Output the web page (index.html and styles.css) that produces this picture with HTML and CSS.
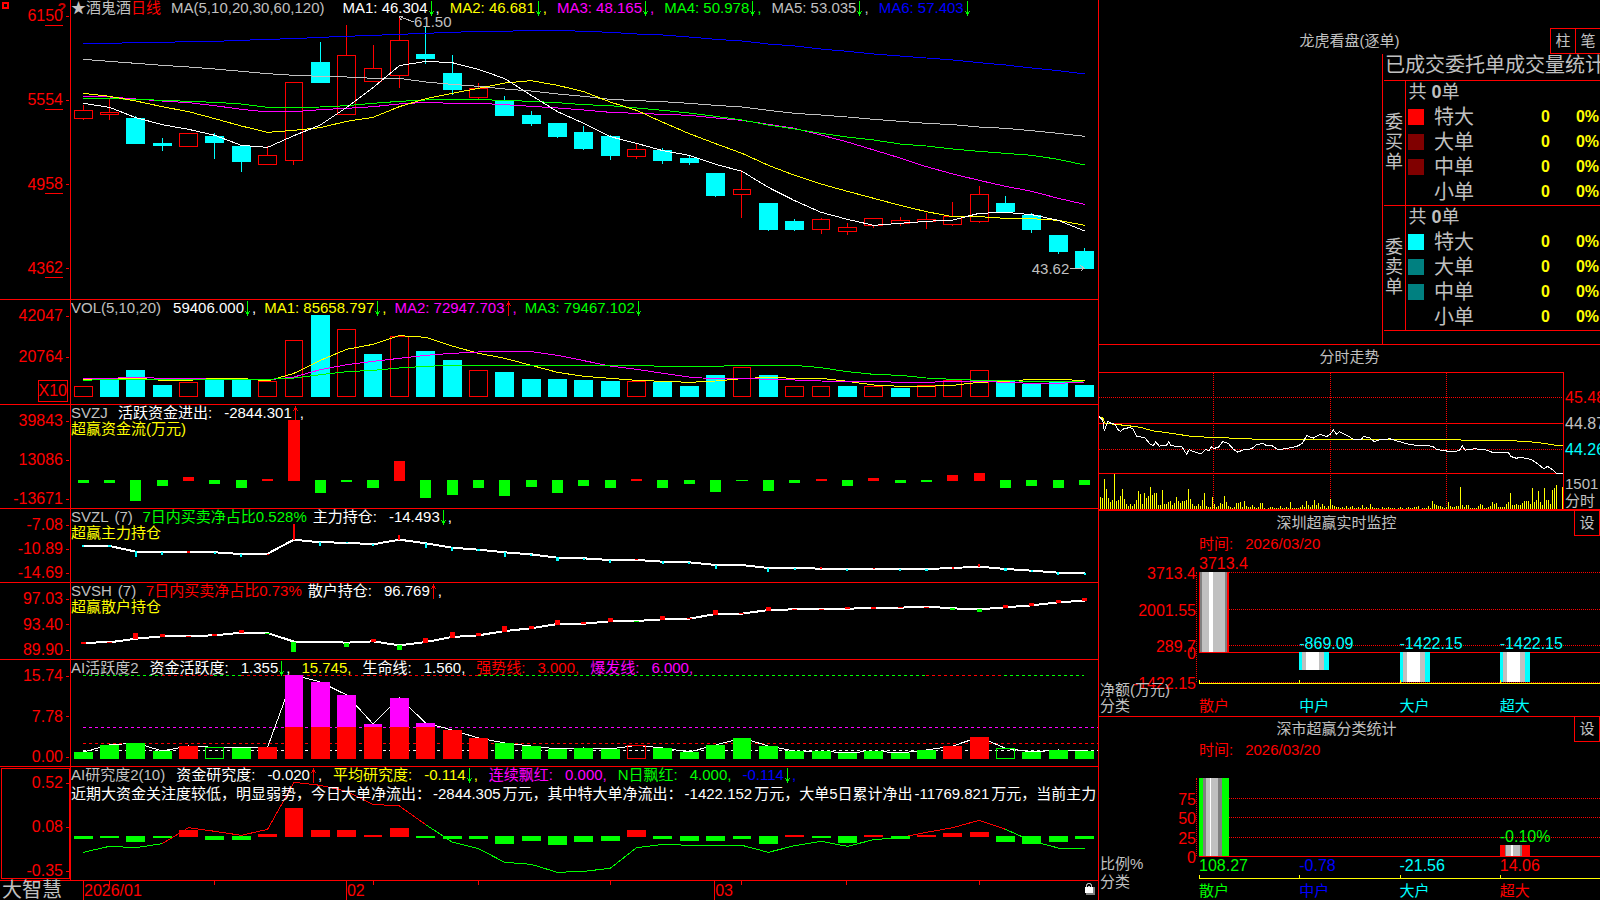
FILE: index.html
```html
<!DOCTYPE html>
<html lang="zh-CN">
<head>
    <meta charset="UTF-8">
    <meta name="viewport" content="width=device-width, initial-scale=1.0">
    <title>酒鬼酒 日线 - 大智慧</title>
    <link rel="stylesheet" href="styles.css">
</head>
<body>
    <svg class="defs" aria-hidden="true">
        <symbol id="down" viewBox="0 0 8 15"><path d="M3 0h1v15h-1zM1 10h1v1h-1zM5 10h1v1h-1zM2 11h3v2h-3z"/></symbol>
        <symbol id="up" viewBox="0 0 8 15"><path d="M3 0h1v15h-1zM1 4h1v1h-1zM5 4h1v1h-1zM2 2h3v2h-3z"/></symbol>
    </svg>

    <div class="terminal">
        <!-- K线与指标 -->
        <main class="charts">
            <section class="panel">
                <div class="axis underlined">
                    <svg class="pin" viewBox="0 0 8 8"><path d="M1 1h5v5h-5z"/></svg>
                    <b class="help">?</b>
                    <span class="tick">61<u>50</u></span>
                    <span class="tick">55<u>54</u></span>
                    <span class="tick">49<u>58</u></span>
                    <span class="tick">43<u>62</u></span>
                </div>
                <div class="plot">
                    <svg class="chart" id="kline" viewBox="199 0 2876 897" preserveAspectRatio="none"></svg>
                    <div class="legend averages">
                        <p><span class="name">★酒鬼酒<span class="red">日线</span></span><span class="params">MA(5,10,20,30,60,120)</span>
                            <span class="white">MA1: 46.304<svg class="arrow down"><use href="#down"/></svg>,</span>
                            <span class="yellow">MA2: 46.681<svg class="arrow down"><use href="#down"/></svg>,</span>
                            <span class="magenta">MA3: 48.165<svg class="arrow down"><use href="#down"/></svg>,</span>
                            <span class="lime">MA4: 50.978<svg class="arrow down"><use href="#down"/></svg>,</span>
                            <span>MA5: 53.035<svg class="arrow down"><use href="#down"/></svg>,</span>
                            <span class="blue">MA6: 57.403<svg class="arrow down"><use href="#down"/></svg></span></p>
                    </div>
                    <span class="mark high">61.50</span>
                    <span class="mark low">43.62</span>
                </div>
            </section>

            <section class="panel">
                <div class="axis volume-axis">
                    <span class="tick">42047</span>
                    <span class="tick">20764</span>
                    <span class="unit">X10</span>
                </div>
                <div class="plot">
                    <svg class="chart" id="vol" viewBox="199 12 2876 312" preserveAspectRatio="none"></svg>
                    <div class="legend volumes">
                        <p><span class="params">VOL(5,10,20)</span>
                            <span class="white">59406.000<svg class="arrow down"><use href="#down"/></svg>,</span>
                            <span class="yellow">MA1: 85658.797<svg class="arrow down"><use href="#down"/></svg>,</span>
                            <span class="magenta">MA2: 72947.703<svg class="arrow up"><use href="#up"/></svg>,</span>
                            <span class="lime">MA3: 79467.102<svg class="arrow down"><use href="#down"/></svg></span></p>
                    </div>
                </div>
            </section>

            <section class="panel">
                <div class="axis">
                    <span class="tick">39843</span>
                    <span class="tick">13086</span>
                    <span class="tick">-13671</span>
                </div>
                <div class="plot">
                    <svg class="chart" id="svzj" viewBox="199 327 2876 309" preserveAspectRatio="none"></svg>
                    <div class="legend">
                        <p><span class="code wide">SVZJ</span><span class="white">活跃资金进出:<span class="val">-2844.301</span><svg class="arrow up"><use href="#up"/></svg>,</span></p>
                        <p class="yellow">超赢资金流(万元)</p>
                    </div>
                </div>
            </section>

            <section class="panel">
                <div class="axis">
                    <span class="tick">-7.08</span>
                    <span class="tick">-10.89</span>
                    <span class="tick">-14.69</span>
                </div>
                <div class="plot">
                    <svg class="chart" id="svzl" viewBox="199 639 2876 219" preserveAspectRatio="none"></svg>
                    <div class="legend">
                        <p><span class="code">SVZL</span><span class="period">(7)</span><span class="lime">7日内买卖净占比0.528%</span><span class="white">主力持仓:<span class="val">-14.493</span><svg class="arrow down"><use href="#down"/></svg>,</span></p>
                        <p class="yellow">超赢主力持仓</p>
                    </div>
                </div>
            </section>

            <section class="panel">
                <div class="axis">
                    <span class="tick">97.03</span>
                    <span class="tick">93.40</span>
                    <span class="tick">89.90</span>
                </div>
                <div class="plot">
                    <svg class="chart" id="svsh" viewBox="199 9 2876 228" preserveAspectRatio="none"></svg>
                    <div class="legend">
                        <p><span class="code">SVSH</span><span class="period">(7)</span><span class="red">7日内买卖净占比0.73%</span><span class="white">散户持仓:<span class="val">96.769</span><svg class="arrow up"><use href="#up"/></svg>,</span></p>
                        <p class="yellow">超赢散户持仓</p>
                    </div>
                </div>
            </section>

            <section class="panel">
                <div class="axis">
                    <span class="tick">15.74</span>
                    <span class="tick">7.78</span>
                    <span class="tick">0.00</span>
                </div>
                <div class="plot">
                    <svg class="chart" id="active" viewBox="199 240 2876 318" preserveAspectRatio="none"></svg>
                    <div class="legend spaced">
                        <p><span>AI活跃度2</span><span class="white">资金活跃度:<span class="val">1.355</span><svg class="arrow down"><use href="#down"/></svg>,</span><span class="yellow">15.745,</span><span class="white">生命线:<span class="val">1.560,</span></span><span class="red">强势线:<span class="val">3.000,</span></span><span class="magenta">爆发线:<span class="val">6.000,</span></span></p>
                    </div>
                </div>
            </section>

            <section class="panel selected">
                <div class="axis">
                    <span class="tick">0.52</span>
                    <span class="tick">0.08</span>
                    <span class="tick">-0.35</span>
                </div>
                <div class="plot">
                    <svg class="chart" id="research" viewBox="199 561 2876 339" preserveAspectRatio="none"></svg>
                    <div class="legend spaced">
                        <p><span>AI研究度2(10)</span><span class="white">资金研究度:<span class="val">-0.020</span><svg class="arrow up"><use href="#up"/></svg>,</span><span class="yellow">平均研究度:<span class="val">-0.114</span><svg class="arrow down"><use href="#down"/></svg>,</span><span class="magenta">连续飘红:<span class="val">0.000,</span></span><span class="lime">N日飘红:<span class="val">4.000,</span></span><span class="blue">-0.114<svg class="arrow down"><use href="#down"/></svg>,</span></p>
                        <p class="comment">近期大资金关注度较低，明显弱势，今日大单净流出：<span>-2844.305</span>万元，其中特大单净流出：<span>-1422.152</span>万元，大单5日累计净出<span>-11769.821</span>万元，当前主力</p>
                    </div>
                </div>
            </section>

            <footer class="timeline">
                <div class="brand">大智慧</div>
                <div class="plot">
                    <svg class="chart" id="dates" viewBox="199 903 2876 57" preserveAspectRatio="none"></svg>
                    <div class="months"><span>2026/01</span><span>02</span><span>03</span></div>
                    <svg class="lock" viewBox="0 0 12 13">
                        <path fill="#808080" d="M2 5h9v8H2z"/><path fill="#fff" d="M1 5h8v6H1z"/>
                        <path fill="none" stroke="#c0c0c0" d="M2.500 5V2.500h1v-1h3v1h1V5M4 4.500h2"/>
                    </svg>
                </div>
            </footer>
        </main>

        <aside class="side">
            <!-- 逐单统计 -->
            <section class="orders">
                <header class="orders-head">
                    <h2>龙虎看盘(逐单)</h2>
                    <div class="modes"><button>柱</button><button>笔</button></div>
                </header>
                <div class="orders-body">
                    <table>
                        <colgroup><col class="c-group"><col class="c-swatch"><col class="c-label"><col><col class="c-pct"></colgroup>
                        <thead>
                            <tr><th colspan="5"><div>已成交委托单成交量统计</div></th></tr>
                        </thead>
                        <tbody>
                            <tr><th rowspan="5" class="group"><div>委买单</div></th><td colspan="4" class="total">共 <b>0</b>单</td></tr>
                            <tr><td><i class="swatch buy"></i></td><td>特大</td><td class="num">0</td><td class="num">0%</td></tr>
                            <tr><td><i class="swatch buy-dim"></i></td><td>大单</td><td class="num">0</td><td class="num">0%</td></tr>
                            <tr><td><i class="swatch buy-dim"></i></td><td>中单</td><td class="num">0</td><td class="num">0%</td></tr>
                            <tr><td></td><td>小单</td><td class="num">0</td><td class="num">0%</td></tr>
                        </tbody>
                        <tbody>
                            <tr><th rowspan="5" class="group"><div>委卖单</div></th><td colspan="4" class="total">共 <b>0</b>单</td></tr>
                            <tr><td><i class="swatch sell"></i></td><td>特大</td><td class="num">0</td><td class="num">0%</td></tr>
                            <tr><td><i class="swatch sell-dim"></i></td><td>大单</td><td class="num">0</td><td class="num">0%</td></tr>
                            <tr><td><i class="swatch sell-dim"></i></td><td>中单</td><td class="num">0</td><td class="num">0%</td></tr>
                            <tr><td></td><td>小单</td><td class="num">0</td><td class="num">0%</td></tr>
                        </tbody>
                    </table>
                </div>
            </section>

            <!-- 分时走势 -->
            <section class="intraday">
                <h2>分时走势</h2>
                <div class="intraday-body">
                    <div class="intraday-plot">
                        <svg class="chart" id="minute" viewBox="27 98 1392 411" preserveAspectRatio="none"></svg>
                    </div>
                    <div class="prices">
                        <span class="red">45.48</span>
                        <span>44.87</span>
                        <span class="cyan">44.26</span>
                        <div class="prices-foot">1501<br>分时</div>
                    </div>
                </div>
            </section>

            <section class="stat">
                <header><h2>深圳超赢实时监控</h2><button>设</button></header>
                <p class="time">时间:<span class="val">2026/03/20</span></p>
                <div class="bars" id="net"></div>
                <div class="cats tall"><span class="red">散户</span><span class="cyan">中户</span><span class="cyan">大户</span><span class="cyan">超大</span></div>
                <div class="row-names">净额(万元)<br>分类</div>
            </section>

            <section class="stat">
                <header><h2>深市超赢分类统计</h2><button>设</button></header>
                <p class="time">时间:<span class="val">2026/03/20</span></p>
                <div class="bars" id="ratio"></div>
                <div class="values"><span class="lime">108.27</span><span class="blue">-0.78</span><span class="cyan">-21.56</span><span class="red">14.06</span></div>
                <div class="cats"><span class="lime">散户</span><span class="blue">中户</span><span class="cyan">大户</span><span class="red">超大</span></div>
                <div class="row-names loose">比例%<br>分类</div>
            </section>
        </aside>
    </div>

    <script src="charts.js"></script>
</body>
</html>
```
FILE: styles.css
```css
* {
    box-sizing: border-box;
}

body {
    margin: 0;
    background: #000;
    color: #c0c0c0;
    font-family: "Liberation Sans", "Noto Sans CJK SC", sans-serif;
    font-size: 15px;
    line-height: 16px;
}

h2, p {
    margin: 0;
    font-size: 15px;
    font-weight: normal;
}

button {
    width: 26px;
    height: 26px;
    padding: 0;
    background: #000;
    color: #c0c0c0;
    border: 1px solid #f00;
    font: inherit;
}

.defs {
    display: none;
}

.red { color: #f00; }
.white { color: #fff; }
.yellow { color: #ff0; }
.magenta { color: #f0f; }
.lime { color: #0f0; }
.blue { color: #00f; }
.cyan { color: #0ff; }

.terminal {
    display: grid;
    grid-template-columns: minmax(0, 1099fr) minmax(0, 501fr);
    height: 100vh;
    overflow: hidden;
}

/* left side */
.charts {
    display: grid;
    grid-template-rows: 300fr 105fr 104fr 74fr 77fr 107fr 114fr 19fr;
    border-right: 1px solid #f00;
    min-height: 0;
}

.panel, .timeline {
    display: grid;
    grid-template-columns: 71px minmax(0, 1fr);
    min-height: 0;
}

.panel {
    border-bottom: 1px solid #f00;
}

.axis {
    position: relative;
    display: flex;
    flex-direction: column;
    justify-content: space-between;
    padding-top: 7px;
    border-right: 1px solid #f00;
    color: #f00;
    font-size: 16px;
    line-height: 18px;
    min-height: 0;
}

.axis.underlined {
    padding-bottom: 21px;
}

.tick {
    display: flex;
    justify-content: flex-end;
    align-items: center;
    height: 18px;
}

.tick::after {
    content: "";
    width: 3px;
    height: 1px;
    margin: 0 1px 0 3px;
    background: #f00;
}

.tick u {
    height: 19px;
    border-bottom: 1px solid #f00;
    text-decoration: none;
}

.volume-axis .tick + .tick {
    margin-top: 23px;
}

.volume-axis {
    justify-content: flex-start;
}

.unit {
    align-self: flex-end;
    margin: auto 2px 2px 0;
    border: 1px solid #f00;
    line-height: 20px;
}

.selected .axis {
    outline: 1px solid #f00;
    outline-offset: -2px;
}

.pin {
    position: absolute;
    left: 2px;
    top: 2px;
    width: 8px;
    height: 8px;
    fill: none;
    stroke: #f00;
    stroke-width: 2;
}

.help {
    position: absolute;
    right: 4px;
    top: 0;
    color: #c00;
    font-size: 14px;
    line-height: 16px;
}

.plot {
    position: relative;
    display: grid;
    grid-template: minmax(0, 1fr) / minmax(0, 1fr);
    overflow: hidden;
}

.plot > .chart, .plot > .legend, .plot > .months {
    grid-area: 1 / 1;
}

.chart {
    display: block;
    width: 100%;
    height: 100%;
    shape-rendering: crispEdges;
}

.chart * {
    vector-effect: non-scaling-stroke;
}

.legend {
    white-space: nowrap;
}

.legend p {
    display: flex;
    gap: 6px;
    height: 16px;
}

.legend.averages p {
    gap: 10px;
}

.legend.volumes p {
    gap: 8px;
}

.legend.spaced p {
    gap: 11px;
}

.averages .params {
    margin-right: 8px;
}

.volumes .params {
    margin-right: 4px;
}

.legend .code {
    min-width: 36px;
}

.legend .code.wide {
    min-width: 41px;
}

.legend .period {
    min-width: 22px;
}

.val {
    margin-left: 12px;
}

.legend p.comment {
    display: block;
    margin-top: 3px;
    color: #fff;
}

.comment span {
    margin: 0 2px;
}

.arrow {
    width: 8px;
    height: 15px;
    vertical-align: -3px;
    shape-rendering: crispEdges;
}

.arrow.down { fill: #0f0; }
.arrow.up { fill: #f00; }

.mark {
    position: absolute;
}

.mark.high {
    left: 33.4%;
    top: 14px;
}

.mark.low {
    right: 2.8%;
    top: 87.3%;
}

.brand {
    padding-left: 2px;
    font-size: 20px;
    line-height: 19px;
}

.months {
    display: grid;
    grid-template-columns: 737fr 1032fr 1073fr;
    padding-left: 13px;
    color: #f00;
    font-size: 16px;
    line-height: 19px;
}

.lock {
    position: absolute;
    right: 2px;
    top: 1px;
    width: 12px;
    height: 13px;
}

/* right side */
.side {
    display: grid;
    grid-template-rows: 345fr 166fr 206fr 183fr;
    min-height: 0;
}

.orders {
    display: flex;
    flex-direction: column;
    border-bottom: 1px solid #f00;
    min-height: 0;
}

.orders-head {
    display: grid;
    grid-template-columns: 1fr auto 1fr;
    align-items: center;
    padding-top: 28px;
}

.orders-head h2 {
    grid-column: 2;
}

.modes {
    display: flex;
    justify-self: end;
}

.modes button + button {
    width: 25px;
    margin-left: -1px;
    border-right: 0;
}

.orders-body {
    flex: 1;
    width: 218px;
    margin-left: auto;
    padding-left: 1px;
    border-left: 1px solid #f00;
    overflow: hidden;
}

.orders table {
    width: 100%;
    border-collapse: collapse;
    table-layout: fixed;
    font-size: 20px;
    line-height: 22px;
}

.c-group { width: 21px; }
.c-swatch { width: 29px; }
.c-label { width: 60px; }
.c-pct { width: 49px; }

.orders th, .orders td {
    height: 25px;
    padding: 0 0 2px;
    font-weight: normal;
    text-align: left;
    vertical-align: middle;
    white-space: nowrap;
}

.orders thead th, .orders tbody {
    border-bottom: 1px solid #f00;
}

.orders thead div {
    height: 24px;
    overflow: hidden;
    padding-left: 1px;
}

.orders .group {
    border-right: 1px solid #f00;
}

.group div {
    width: 20px;
    padding-left: 1px;
    font-size: 18px;
    line-height: 20px;
    white-space: normal;
    word-break: break-all;
}

.orders .total {
    padding-left: 3px;
    font-size: 18px;
}

.orders .num {
    padding-right: 1px;
    color: #ff0;
    font-size: 16px;
    font-weight: bold;
    text-align: right;
}

.swatch {
    display: block;
    width: 16px;
    height: 16px;
    margin-left: 2px;
}

.buy { background: #f00; }
.buy-dim { background: #800000; }
.sell { background: #0ff; }
.sell-dim { background: #008080; }

.intraday {
    display: flex;
    flex-direction: column;
    border-bottom: 2px solid #f00;
    min-height: 0;
}

.intraday h2 {
    height: 27px;
    line-height: 24px;
    text-align: center;
}

.intraday-body {
    flex: 1;
    display: flex;
    min-height: 0;
}

.intraday-plot {
    flex: 1;
    border: 1px solid #f00;
    border-width: 1px 1px 0 0;
}

.prices {
    display: flex;
    flex-direction: column;
    gap: 8px;
    width: 36px;
    padding: 17px 0 0 1px;
    overflow: hidden;
    font-size: 16px;
    line-height: 18px;
}

.prices-foot {
    margin-top: auto;
    font-size: 15px;
    line-height: 17px;
}

.stat {
    position: relative;
    display: flex;
    flex-direction: column;
    min-height: 0;
}

.stat + .stat {
    border-top: 1px solid #f00;
    margin-top: -1px;
}

.stat header {
    display: grid;
    grid-template-columns: 26px 1fr 26px;
    height: 25px;
    text-align: center;
    line-height: 24px;
}

.stat header h2 {
    grid-column: 2;
    padding-right: 26px;
}

.stat header button {
    margin-top: -1px;
}

.time {
    margin-left: 100px;
    color: #f00;
    line-height: 16px;
    height: 18px;
}

.bars {
    position: relative;
    flex: 1;
    margin: 18px 0 0 100px;
    min-height: 0;
}

.bars::before {
    content: "";
    position: absolute;
    left: -3px;
    height: 100%;
    border-left: 1px dotted #f00;
}

.rule {
    position: absolute;
    left: 0;
    right: 0;
    height: 0;
    border-top: 1px dotted #f00;
}

.rule.zero {
    border-top-style: solid;
}

.rule span {
    position: absolute;
    right: 100%;
    top: -7px;
    margin-right: 3px;
    color: #f00;
    font-size: 16px;
}

.bar {
    position: absolute;
    width: 30px;
}

.bar span {
    position: absolute;
    left: 0;
    bottom: 100%;
    font-size: 16px;
    white-space: nowrap;
}

.bar.retail {
    background: linear-gradient(90deg, #f00 1px, #808080 1px 3px, #c0c0c0 3px 10px, #fff 10px 14px, #c0c0c0 14px 26px, #808080 26px 28px, #f00 28px);
}

.bar.outflow {
    background: linear-gradient(90deg, #0ff 3px, #c0c0c0 3px 7px, #fff 7px 20px, #c0c0c0 20px 25px, #0ff 25px);
}

.bar.retail-ratio {
    background: linear-gradient(90deg, #0f0 4px, #808080 4px 7px, #c0c0c0 7px 11px, #fff 11px 12px, #c0c0c0 12px 19px, #808080 19px 23px, #0f0 23px);
}

.bar.super-ratio {
    background: linear-gradient(90deg, #f00 5px, #808080 5px 6px, #c0c0c0 6px 11px, #fff 11px 13px, #c0c0c0 13px 20px, #808080 20px 22px, #f00 22px);
}

.values, .cats {
    display: grid;
    grid-template-columns: repeat(4, 1fr);
    margin-left: 100px;
}

.values {
    height: 18px;
    padding-top: 2px;
    font-size: 16px;
}

.cats {
    height: 26px;
    padding-top: 4px;
    line-height: 16px;
}

.cats span {
    position: relative;
    height: 22px;
    padding-top: 4px;
    border-top: 1px solid #ff0;
}

.cats span::before {
    content: "";
    position: absolute;
    left: 0;
    bottom: 100%;
    width: 1px;
    height: 4px;
    background: #ff0;
}

.cats.tall {
    height: 35px;
    padding-top: 1px;
}

.cats.tall span {
    padding-top: 14px;
}

.row-names {
    position: absolute;
    left: 1px;
    bottom: 3px;
}

.row-names.loose {
    bottom: 9px;
    line-height: 18px;
}
```
FILE: charts.js
```js
const RED = '#f00', CYAN = '#0ff', LIME = '#0f0', WHITE = '#fff', YELLOW = '#ff0', MAGENTA = '#f0f', BLUE = '#00f', SILVER = '#c0c0c0';

// horizontal centre of the n-th day
const dayX = i => 233 + 73.8 * i;

function add(id, tag, attrs) {
    const el = document.createElementNS('http://www.w3.org/2000/svg', tag);
    for (const key in attrs) el.setAttribute(key, attrs[key]);
    document.getElementById(id).appendChild(el);
}

function fillBox(id, i, top, bottom, width, color) {
    add(id, 'rect', { x: dayX(i) - width / 2, y: top, width: width, height: bottom - top, fill: color });
}

function hollowBox(id, i, top, bottom, color, stroke = 1) {
    add(id, 'rect', { x: dayX(i) - 25, y: top, width: 50, height: bottom - top, fill: 'none', stroke: color, 'stroke-width': stroke });
}

function line(id, points, color, width = 1, dash = '') {
    add(id, 'polyline', { points: points.map(p => p.join(',')).join(' '), fill: 'none', stroke: color, 'stroke-width': width, 'stroke-dasharray': dash });
}

function series(id, ys, color, width, from = 0) {
    line(id, ys.map((y, i) => [dayX(i + from), y]), color, width);
}

// K线: high, body top, body bottom, low, rising
const candles = [
    [315, 331, 355, 359, 1], [296, 338, 343, 359, 1], [348, 354, 432, 432, 0], [414, 429, 437, 452, 0],
    [400, 400, 439, 439, 1], [399, 408, 429, 476, 0], [438, 438, 486, 515, 0], [438, 466, 493, 493, 1],
    [247, 247, 481, 494, 1], [126, 186, 248, 248, 0], [75, 166, 343, 343, 1], [135, 205, 244, 244, 1],
    [50, 121, 226, 263, 1], [80, 162, 177, 191, 0], [165, 219, 269, 285, 0], [249, 265, 292, 297, 1],
    [288, 302, 347, 347, 0], [333, 345, 371, 377, 0], [369, 369, 411, 413, 0], [378, 396, 446, 449, 0],
    [406, 408, 467, 479, 0], [430, 448, 469, 476, 1], [444, 450, 482, 491, 0], [466, 474, 488, 494, 0],
    [519, 519, 587, 590, 0], [510, 568, 583, 653, 1], [609, 609, 689, 692, 0], [657, 663, 689, 692, 0],
    [654, 658, 688, 701, 1], [669, 682, 694, 704, 1], [655, 655, 676, 683, 1], [651, 661, 670, 677, 1],
    [639, 658, 664, 686, 1], [606, 649, 673, 677, 1], [558, 583, 664, 668, 1], [588, 609, 636, 636, 0],
    [640, 645, 689, 698, 0], [705, 705, 755, 761, 0], [744, 753, 806, 806, 0]
];

candles.forEach(([high, top, bottom, low, rising], i) => {
    const color = rising ? RED : CYAN;
    line('kline', [[dayX(i), high], [dayX(i), top]], color);
    line('kline', [[dayX(i), bottom], [dayX(i), low]], color);
    if (rising) hollowBox('kline', i, top, bottom, RED);
    else fillBox('kline', i, top, bottom, 53, CYAN);
});

series('kline', [130, 130, 128, 127, 125, 124, 121, 118, 116, 112, 109, 106, 103, 100, 97, 94, 94, 91, 91, 94, 97, 102, 105, 111, 118, 123, 132, 138, 147, 154, 162, 168, 174, 180, 188, 195, 204, 212, 222], BLUE);
series('kline', [178, 184, 190, 196, 201, 207, 214, 221, 226, 229, 231, 235, 235, 246, 253, 259, 267, 273, 282, 289, 298, 302, 305, 310, 316, 321, 331, 340, 345, 351, 358, 364, 370, 374, 381, 385, 392, 400, 409], SILVER);
series('kline', [289, 291, 297, 303, 308, 317, 328, 336, 335, 329, 325, 320, 312, 307, 310, 310, 314, 319, 324, 330, 337, 340, 343, 346, 354, 361, 373, 385, 405, 426, 450, 474, 500, 522, 541, 559, 574, 595, 613], MAGENTA);
series('kline', [295, 296, 298, 301, 304, 307, 312, 322, 322, 321, 317, 310, 304, 300, 298, 299, 301, 304, 308, 314, 317, 324, 331, 339, 349, 360, 375, 387, 400, 411, 420, 432, 438, 447, 454, 460, 466, 478, 495], LIME);
series('kline', [280, 289, 303, 320, 335, 356, 378, 397, 391, 383, 364, 352, 320, 296, 280, 265, 249, 242, 256, 275, 306, 331, 367, 401, 431, 460, 496, 526, 552, 574, 595, 616, 635, 650, 650, 655, 656, 661, 676], YELLOW);
series('kline', [310, 322, 353, 374, 388, 406, 436, 442, 407, 375, 322, 263, 197, 184, 188, 208, 236, 286, 335, 370, 410, 430, 452, 466, 493, 514, 562, 602, 637, 658, 676, 670, 664, 660, 640, 637, 644, 661, 693], WHITE);
line('kline', [[1158, 66], [1118, 49], [1128, 49]], SILVER);
line('kline', [[1118, 49], [1124, 60]], SILVER);
line('kline', [[2996, 805], [3034, 805]], SILVER);
line('kline', [[3026, 796], [3036, 805], [3026, 814]], SILVER);

// 成交量
const volumes = [271, 250, 222, 267, 259, 249, 252, 256, 133, 57, 100, 174, 121, 165, 192, 223, 228, 249, 249, 252, 255, 256, 257, 270, 237, 214, 237, 271, 271, 270, 271, 276, 268, 254, 223, 255, 263, 258, 267];
const risingVolume = [0, 4, 7, 8, 10, 12, 15, 21, 25, 27, 28, 30, 32, 33, 34];
volumes.forEach((top, i) => {
    if (risingVolume.includes(i)) hollowBox('vol', i, top, 301, RED);
    else fillBox('vol', i, top, 303, 53, CYAN);
});
series('vol', [250, 250, 246, 253, 253, 247, 247, 255, 232, 193, 160, 145, 119, 124, 150, 172, 187, 208, 229, 241, 247, 253, 256, 259, 255, 248, 244, 247, 247, 256, 267, 271, 271, 268, 259, 256, 250, 250, 254], YELLOW);
series('vol', [247, 247, 244, 247, 247, 250, 250, 252, 243, 221, 206, 196, 187, 178, 172, 168, 166, 167, 178, 194, 210, 220, 232, 243, 249, 247, 250, 252, 255, 256, 256, 259, 259, 256, 256, 259, 262, 262, 258], MAGENTA);
series('vol', [253, 250, 250, 250, 250, 250, 252, 250, 246, 236, 227, 223, 216, 211, 208, 208, 208, 208, 208, 208, 208, 208, 211, 211, 211, 208, 208, 208, 215, 227, 235, 238, 246, 250, 253, 254, 256, 256, 255], LIME);

// 资金流
[560, 560, 614, 570, 543, 564, 576, 549, 372, 591, 557, 576, 495, 606, 597, 576, 600, 573, 591, 570, 576, 549, 576, 564, 588, 555, 585, 561, 549, 570, 546, 561, 558, 537, 531, 576, 570, 576, 567].forEach((y, i) => {
    if (y < 553) fillBox('svzj', i, y, 555, 31, RED);
    else fillBox('svzj', i, 552, y, 31, LIME);
});

// 主力持仓
series('svzl', [749, 750, 767, 768, 768, 769, 774, 773, 731, 739, 740, 745, 731, 742, 755, 761, 769, 775, 785, 787, 792, 792, 797, 799, 807, 807, 816, 816, 818, 819, 819, 819, 819, 816, 812, 819, 824, 830, 831], WHITE, 2);
[[0, 747, 752], [1, 748, 753], [2, 766, 782], [3, 768, 776], [5, 767, 773], [6, 774, 782], [9, 738, 749], [10, 738, 742], [11, 743, 749], [13, 741, 755], [14, 753, 764], [15, 759, 764], [16, 768, 782], [17, 773, 779], [18, 783, 795], [19, 785, 791], [20, 792, 801], [22, 795, 803], [23, 797, 803], [24, 807, 818], [26, 816, 828], [27, 816, 822], [29, 819, 825], [31, 819, 825], [32, 819, 825], [35, 816, 825], [36, 822, 828], [37, 828, 837], [38, 831, 837]].forEach(([i, top, bottom]) => fillBox('svzl', i, top, bottom, 6, CYAN));
[[4, 765, 771], [7, 773, 776], [8, 684, 731], [12, 717, 731], [21, 789, 792], [28, 813, 819], [30, 816, 819], [33, 813, 819], [34, 804, 813]].forEach(([i, top, bottom]) => fillBox('svzl', i, top, bottom, 6, RED));

// 散户持仓
series('svsh', [188, 187, 176, 169, 168, 166, 158, 159, 185, 185, 188, 184, 196, 186, 171, 166, 153, 145, 132, 131, 124, 123, 118, 116, 102, 101, 90, 88, 87, 86, 84, 83, 80, 85, 88, 82, 76, 67, 62], WHITE, 2);
[[0, 186, 192], [1, 186, 189], [2, 159, 177], [3, 162, 171], [4, 168, 171], [5, 162, 167], [6, 150, 159], [11, 177, 186], [13, 174, 189], [14, 156, 173], [15, 159, 168], [16, 138, 156], [17, 138, 147], [18, 120, 135], [19, 126, 132], [20, 114, 126], [22, 108, 120], [23, 114, 117], [24, 90, 105], [25, 99, 102], [26, 81, 93], [27, 87, 90], [28, 87, 90], [29, 81, 87], [30, 81, 87], [31, 81, 84], [32, 81, 84], [35, 75, 84], [36, 69, 78], [37, 60, 69], [38, 54, 63]].forEach(([i, top, bottom]) => fillBox('svsh', i, top, bottom, 14, RED));
[[7, 159, 162], [8, 186, 216], [10, 189, 201], [12, 195, 210], [21, 123, 126], [33, 84, 90], [34, 87, 96]].forEach(([i, top, bottom]) => fillBox('svsh', i, top, bottom, 14, LIME));

// AI活跃度
[[233, 455, LIME], [455, 600, RED], [600, 676, LIME], [676, 1340, RED], [1340, 2592, LIME], [2592, 2812, RED], [2812, 3035, LIME]].forEach(([from, to, color]) => line('active', [[from, 287], [to, 287]], color, 1, '3 3'));
line('active', [[233, 442], [3074, 442]], MAGENTA, 1, '3 3');
line('active', [[233, 490], [3074, 490]], RED, 1, '3 3');
line('active', [[233, 511], [3074, 511]], WHITE, 1, '3 3');
const activity = [516, 495, 489, 513, 498, 502, 504, 501, 285, 306, 345, 432, 354, 429, 450, 474, 489, 498, 507, 504, 507, 496, 504, 516, 495, 474, 498, 513, 513, 519, 513, 519, 510, 498, 471, 505, 516, 510, 513];
series('active', activity, WHITE);
activity.forEach((top, i) => {
    const strong = [4, 7, 8, 9, 10, 11, 12, 13, 14, 15, 33, 34].includes(i);
    if (i === 5 || i === 35) hollowBox('active', i, top, 535, LIME);
    else if (i === 21) hollowBox('active', i, top, 535, RED);
    else fillBox('active', i, top, 537, 53, strong ? RED : LIME);
    if (top < 441) fillBox('active', i, top, 441, 53, MAGENTA);
});

// AI研究度
const research = [817, 799, 803, 791, 743, 754, 766, 748, 607, 616, 634, 673, 678, 734, 786, 806, 847, 853, 877, 874, 865, 803, 793, 796, 798, 796, 817, 797, 784, 799, 779, 773, 757, 743, 721, 748, 783, 804, 804];
[[0, 3, LIME], [3, 13, RED], [13, 31, LIME], [31, 35, RED], [35, 38, LIME]].forEach(([from, to, color]) => series('research', research.slice(from, to + 1), color, 1, from));
[777, 774, 786, 774, 750, 780, 780, 762, 684, 750, 750, 765, 744, 774, 777, 777, 792, 783, 795, 786, 783, 750, 777, 783, 783, 777, 792, 765, 774, 789, 765, 777, 765, 759, 756, 786, 792, 786, 777].forEach((y, i) => {
    if (y < 768) fillBox('research', i, y, 771, 53, RED);
    else fillBox('research', i, 768, y, 53, LIME);
});

// 日期刻度
[233, 970, 2002].forEach(x => line('dates', [[x, 903], [x, 960]], RED));
[306, 600, 1045, 1340, 1709, 2077, 2372, 2742].forEach(x => line('dates', [[x, 903], [x, 914]], RED));

// 分时
[172, 328].forEach(y => line('minute', [[27, y], [1419, y]], RED, 1, '1 1'));
[370, 721, 1069].forEach(x => line('minute', [[x, 99], [x, 507]], RED, 1, '1 1'));
[250, 403].forEach(y => line('minute', [[27, y], [1419, y]], RED));
const ticks = [
    36, 33, 90, 60, 33, 21, 27, 105, 24, 25, 39, 60, 30, 15, 9, 15, 9, 13, 27, 54, 45, 15, 48, 33, 39, 66, 42, 48, 48, 12,
    12, 57, 15, 15, 21, 24, 12, 18, 36, 24, 18, 24, 24, 27, 60, 30, 15, 9, 9, 15, 7, 27, 48, 7, 6, 6, 36, 15, 6, 9,
    18, 15, 39, 21, 9, 6, 3, 4, 18, 18, 21, 6, 24, 9, 6, 6, 12, 6, 3, 4, 18, 18, 3, 0, 3, 6, 6, 3, 3, 3,
    9, 3, 3, 6, 3, 21, 3, 3, 3, 3, 6, 12, 6, 24, 12, 6, 12, 27, 12, 18, 6, 15, 9, 3, 9, 30, 12, 9, 6, 6,
    3, 6, 3, 9, 3, 6, 9, 3, 3, 6, 3, 12, 3, 6, 3, 15, 6, 3, 3, 3, 0, 6, 3, 3, 6, 3, 3, 3, 0, 3,
    6, 3, 0, 3, 6, 3, 3, 6, 6, 9, 0, 3, 3, 3, 9, 3, 24, 15, 12, 9, 9, 6, 3, 6, 21, 9, 6, 6, 9, 9,
    66, 12, 6, 12, 12, 3, 3, 3, 3, 9, 15, 12, 3, 3, 6, 9, 21, 15, 18, 6, 6, 6, 6, 15, 21, 48, 12, 12, 15, 12,
    12, 18, 24, 24, 24, 15, 63, 21, 27, 54, 21, 12, 63, 27, 27, 15, 57, 63, 72, 0, 0, 66
];
ticks.forEach((h, i) => add('minute', 'rect', { x: 30 + 6 * i, y: 508 - h, width: 3, height: h, fill: YELLOW }));
line('minute', [[27, 231], [38, 233], [45, 250], [75, 253], [120, 258], [150, 262], [190, 273], [250, 281], [300, 289], [370, 293], [470, 296], [490, 298], [1105, 298], [1115, 301], [1250, 302], [1310, 305], [1350, 309], [1395, 316], [1420, 317]], YELLOW);
line('minute', [[27, 229], [38, 240], [43, 273], [54, 243], [63, 250], [75, 253], [85, 270], [92, 274], [102, 266], [120, 263], [130, 268], [140, 289], [165, 294], [180, 313], [190, 318], [197, 306], [208, 319], [230, 316], [236, 306], [242, 316], [262, 321], [275, 319], [285, 337], [290, 343], [297, 330], [315, 337], [333, 342], [345, 330], [358, 332], [364, 321], [372, 326], [386, 322], [398, 305], [415, 311], [430, 328], [442, 337], [462, 330], [485, 327], [500, 314], [520, 311], [530, 318], [545, 317], [565, 330], [595, 325], [620, 320], [637, 311], [650, 287], [670, 295], [690, 283], [710, 290], [721, 283], [730, 270], [740, 284], [748, 275], [770, 286], [790, 298], [815, 298], [820, 290], [838, 293], [853, 306], [870, 299], [900, 297], [920, 303], [950, 312], [975, 316], [1010, 316], [1030, 321], [1042, 330], [1065, 332], [1075, 336], [1108, 333], [1117, 318], [1125, 331], [1155, 327], [1190, 331], [1210, 339], [1255, 338], [1262, 350], [1280, 356], [1290, 352], [1325, 360], [1345, 374], [1362, 388], [1372, 380], [1390, 392], [1402, 403], [1420, 403]], WHITE);

// 超赢柱状图
function barChart(id, max, min, rules, bars) {
    const box = document.getElementById(id);
    const pos = v => (max - Math.min(v, max)) / (max - min) * 100;
    let html = '';
    rules.forEach(v => {
        html += `<div class="rule${v === 0 ? ' zero' : ''}" style="top:${pos(v)}%"><span>${v}</span></div>`;
    });
    bars.forEach(([slot, value, label, type, color]) => {
        const top = pos(Math.max(value, 0));
        const height = pos(Math.min(value, 0)) - top;
        html += `<div class="bar ${type}" style="left:${slot * 25}%;top:${top}%;height:${height}%"><span class="${color}">${label}</span></div>`;
    });
    box.innerHTML = html;
}

barChart('net', 3713.4, -1422.15, [3713.4, 2001.55, 289.7, 0, -1422.15], [
    [0, 3713.4, '3713.4', 'retail', 'red'],
    [1, -869.09, '-869.09', 'outflow', 'cyan'],
    [2, -1422.15, '-1422.15', 'outflow', 'cyan'],
    [3, -1422.15, '-1422.15', 'outflow', 'cyan']
]);
barChart('ratio', 101, 0, [75, 50, 25, 0], [
    [0, 108.27, '', 'retail-ratio', 'lime'],
    [3, 14.06, '-0.10%', 'super-ratio', 'lime']
]);
```
